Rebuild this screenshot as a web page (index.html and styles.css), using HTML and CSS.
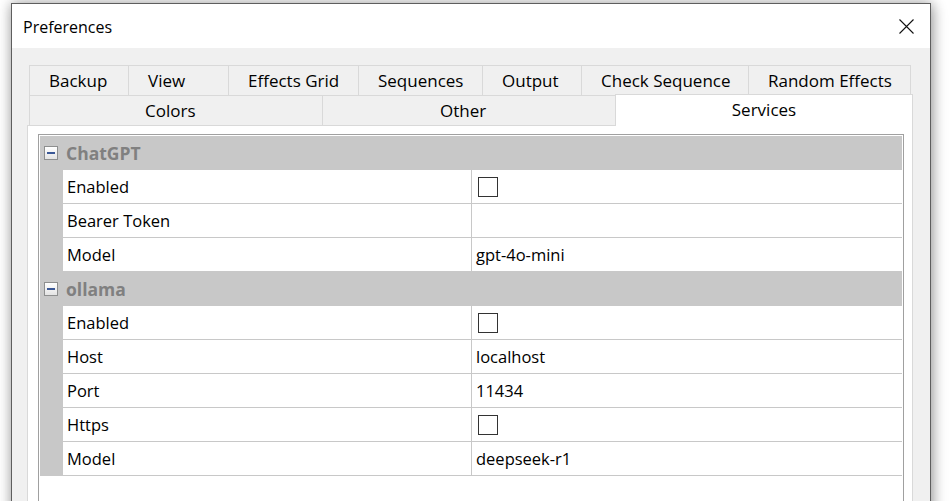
FILE: index.html
```html
<!DOCTYPE html>
<html>
<head>
<meta charset="utf-8">
<title>Preferences</title>
<link rel="stylesheet" href="styles.css">
</head>
<body>
<div class="dialog">
  <div class="titlebar">
    <span class="title">Preferences</span>
    <svg class="close" width="15" height="15" viewBox="0 0 15 15"><path d="M0.5 0.5 L14.5 14.5 M14.5 0.5 L0.5 14.5" stroke="#111" stroke-width="1.1" fill="none"/></svg>
  </div>
  <div class="content">
    <div class="tabrow row1">
      <div class="tab w99">Backup</div>
      <div class="tab w100">View</div>
      <div class="tab w130">Effects Grid</div>
      <div class="tab w124">Sequences</div>
      <div class="tab w99">Output</div>
      <div class="tab w167">Check Sequence</div>
      <div class="tab w163 last">Random Effects</div>
    </div>
    <div class="tabrow row2">
      <div class="tab w293 colors">Colors</div>
      <div class="tab w293 other">Other</div>
      <div class="tab selected">Services</div>
    </div>
    <div class="panel">
      <div class="grid">
        <div class="cat"><span class="toggle"></span><span class="catname">ChatGPT</span></div>
        <div class="row"><div class="gutter"></div><div class="label">Enabled</div><div class="value"><span class="check"></span></div></div>
        <div class="row"><div class="gutter"></div><div class="label">Bearer Token</div><div class="value"></div></div>
        <div class="row"><div class="gutter"></div><div class="label">Model</div><div class="value">gpt-4o-mini</div></div>
        <div class="cat"><span class="toggle"></span><span class="catname">ollama</span></div>
        <div class="row"><div class="gutter"></div><div class="label">Enabled</div><div class="value"><span class="check"></span></div></div>
        <div class="row"><div class="gutter"></div><div class="label">Host</div><div class="value">localhost</div></div>
        <div class="row"><div class="gutter"></div><div class="label">Port</div><div class="value">11434</div></div>
        <div class="row"><div class="gutter"></div><div class="label">Https</div><div class="value"><span class="check"></span></div></div>
        <div class="row"><div class="gutter"></div><div class="label">Model</div><div class="value">deepseek-r1</div></div>
      </div>
    </div>
  </div>
</div>
</body>
</html>
```

FILE: styles.css
```css
html, body {
  margin: 0;
  padding: 0;
  background: #ffffff;
  height: 501px;
  overflow: hidden;
  font-family: "Open Sans", "Noto Sans", sans-serif;
  font-size: 16.5px;
  color: #000;
}

.dialog {
  margin: 3px 0 0 11px;
  width: 920px;
  height: 560px;
  box-sizing: border-box;
  border: 1px solid #5e5e5e;
  background: #f0f0f0;
  box-shadow: 0 0 12px rgba(0, 0, 0, 0.3), 3px 3px 14px rgba(0, 0, 0, 0.2);
}

.titlebar {
  height: 44px;
  background: #ffffff;
  display: flex;
  align-items: center;
  justify-content: space-between;
  padding: 0 16px 0 11px;
}

.title {
  font-size: 16px;
  line-height: 1;
  padding-top: 1px;
}

.close {
  display: block;
  margin-top: 1px;
}

.content {
  padding: 17px 17px 0 15px;
}

.tabrow {
  display: flex;
  height: 30px;
}

.row1 {
  margin: 0 2px;
}

.row2 {
  margin-left: 2px;
}

.tab {
  box-sizing: border-box;
  height: 30px;
  border-top: 1px solid #d9d9d9;
  border-left: 1px solid #d9d9d9;
  background: #f0f0f0;
  display: flex;
  align-items: center;
  justify-content: flex-start;
  white-space: nowrap;
  padding: 0 0 1px 19px;
  font-size: 17px;
}

.tab.last {
  border-right: 1px solid #d9d9d9;
}

.w99 { width: 99px; }
.w100 { width: 100px; }
.w124 { width: 124px; }
.w130 { width: 130px; }
.w163 { width: 163px; }
.w167 { width: 167px; }
.w293 { width: 293px; }

.tab.colors {
  padding-left: 115px;
}

.tab.other {
  padding-left: 117px;
}

.tab.selected {
  flex: 1;
  height: 32px;
  margin-top: -1px;
  background: #ffffff;
  border-right: 1px solid #d9d9d9;
  position: relative;
  z-index: 1;
  justify-content: center;
  padding: 0 0 3px 0;
}

.panel {
  box-sizing: border-box;
  height: 420px;
  background: #ffffff;
  border: 1px solid #d9d9d9;
  padding: 8px 8px 0 10px;
}

.grid {
  box-sizing: border-box;
  height: 420px;
  border: 1px solid #a0a0a0;
  padding: 1px;
  background: #ffffff;
}

.cat {
  height: 34px;
  background: #c8c8c8;
  display: flex;
  align-items: center;
}

.toggle {
  box-sizing: border-box;
  width: 14px;
  height: 14px;
  margin: 0 8px 0 4px;
  border: 1px solid #8e8f8f;
  background: linear-gradient(#ffffff, #e4e4e4);
  display: flex;
  align-items: center;
  justify-content: center;
}

.toggle::before {
  content: "";
  width: 8px;
  height: 2px;
  background: #3b5896;
}

.catname {
  font-weight: bold;
  color: #808080;
  font-size: 17.5px;
}

.row {
  display: flex;
  height: 34px;
  box-sizing: border-box;
  border-bottom: 1px solid #c8c8c8;
}

.gutter {
  width: 23px;
  background: #c8c8c8;
}

.label {
  box-sizing: border-box;
  width: 409px;
  border-right: 1px solid #c8c8c8;
  padding-left: 4px;
  display: flex;
  align-items: center;
  white-space: nowrap;
}

.value {
  flex: 1;
  padding-left: 4px;
  display: flex;
  align-items: center;
  white-space: nowrap;
}

.check {
  box-sizing: border-box;
  width: 20px;
  height: 20px;
  margin-left: 2px;
  border: 1px solid #333333;
  background: #ffffff;
}
```
